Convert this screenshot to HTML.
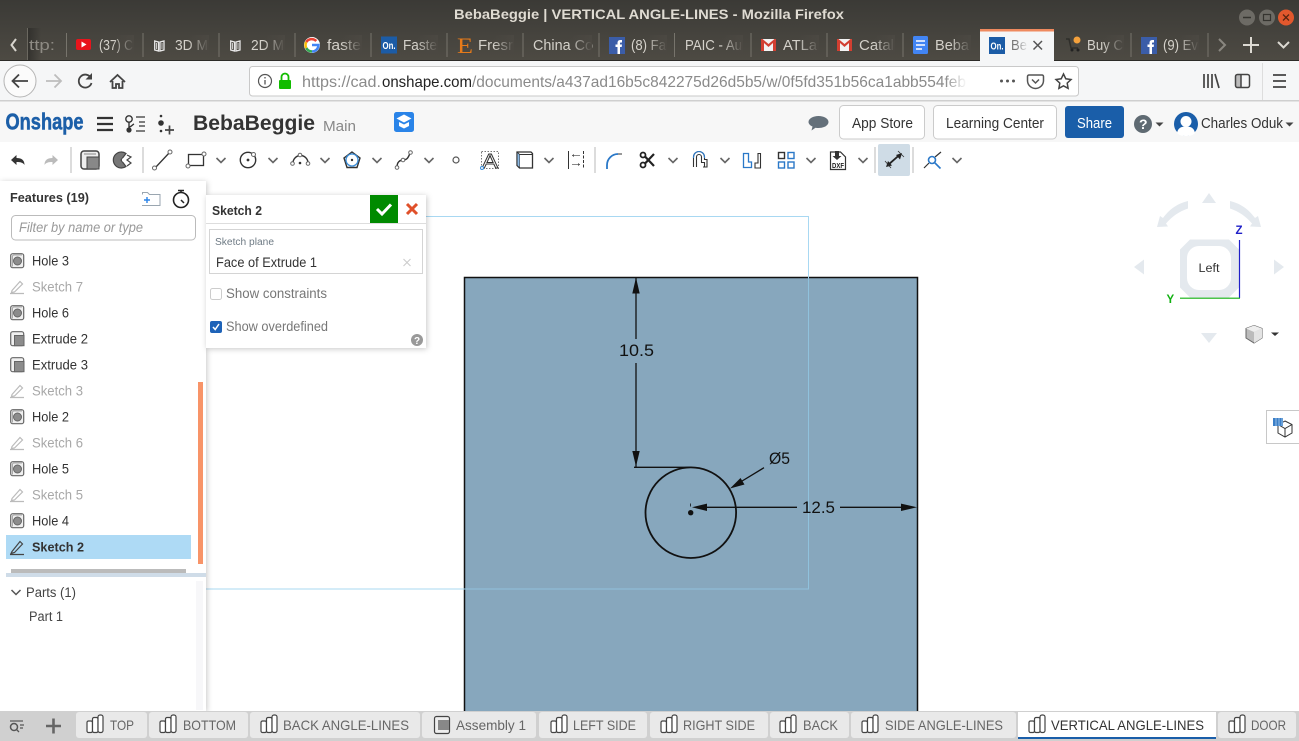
<!DOCTYPE html>
<html><head><meta charset="utf-8"><title>BebaBeggie | VERTICAL ANGLE-LINES - Mozilla Firefox</title>
<style>
html,body{margin:0;padding:0;background:#fff;overflow:hidden}
svg{display:block}
text{font-family:"Liberation Sans",sans-serif}
.t{fill:#d4d1ca;font-size:15px}
.f{font-size:13.5px;fill:#333}
.g{font-size:13.5px;fill:#a8a8a8}
.b{font-size:14px;fill:#666}
.ic{fill:none;stroke:#333;stroke-width:1.4}
</style></head><body>
<svg width="1299" height="741" viewBox="0 0 1299 741" xmlns="http://www.w3.org/2000/svg">
<defs>
<linearGradient id="tb" x1="0" y1="0" x2="0" y2="1"><stop offset="0" stop-color="#3b3a36"/><stop offset="1" stop-color="#4d4a43"/></linearGradient>
<linearGradient id="fd"><stop offset="0" stop-color="#4b4842" stop-opacity="0"/><stop offset="1" stop-color="#4b4842"/></linearGradient>
<linearGradient id="fa"><stop offset="0" stop-color="#f5f6f7" stop-opacity="0"/><stop offset="1" stop-color="#f5f6f7"/></linearGradient>
<linearGradient id="fw"><stop offset="0" stop-color="#fff" stop-opacity="0"/><stop offset="1" stop-color="#fff"/></linearGradient>
<linearGradient id="sd"><stop offset="0" stop-color="#2a2926" stop-opacity=".7"/><stop offset="1" stop-color="#2a2926" stop-opacity="0"/></linearGradient>
<filter id="sh" x="-10%" y="-10%" width="125%" height="125%"><feDropShadow dx="1" dy="1" stdDeviation="3" flood-color="#000" flood-opacity=".22"/></filter>
<g id="hole"><rect x="0.7" y="0.7" width="13" height="14" rx="2" fill="#f0f0f0" stroke="#666" stroke-width="1.200"/><path d="M2.500 13.500V3.500a1.500 1.500 0 0 1 1.500-1.500h8" fill="none" stroke="#aaa"/><circle cx="7.500" cy="8" r="4" fill="#8c8c8c" stroke="#666"/></g>
<g id="ext"><rect x="0.7" y="0.7" width="13" height="14" rx="2" fill="#f0f0f0" stroke="#666" stroke-width="1.200"/><rect x="4.500" y="4.500" width="9.500" height="10.200" fill="#8c8c8c" stroke="#666"/></g>
<g id="pen"><path d="M1 14.500H15M3 11.500 11 2.500l2.500 2.500-8 8-3 .5z" fill="none" stroke="#bbb" stroke-width="1.200"/></g>
<g id="ps" fill="#fff" stroke="#444" stroke-width="1.200"><rect x="1" y="7" width="5.500" height="11.500" rx="1.500"/><rect x="6.500" y="3.500" width="5.500" height="15" rx="1.500"/><rect x="12" y="1" width="5" height="17.500" rx="2"/></g>
<path id="chev" d="M0 0l4.500 4.500L9 0" fill="none" stroke="#666" stroke-width="1.600"/>
<g id="gm"><rect width="15" height="12" fill="#f3f3f3"/><path d="M0 0v12h3V4l4.500 4L12 4v8h3V0h-1.500L7.500 5 1.500 0z" fill="#d23f31"/></g>
<g id="fb"><rect width="16" height="17" fill="#3b5da8"/><path d="M8.500 17v-7H6.500V7.500h2V6c0-2 1-3 3-3h1.500v2.500h-1c-.8 0-1 .3-1 1v1h2l-.3 2.500H11v7z" fill="#fff"/></g>
<g id="on"><rect width="16" height="17" fill="#1c5ca6"/><text x="1.500" y="12.500" font-size="10.500" font-weight="700" fill="#fff" textLength="13" lengthAdjust="spacingAndGlyphs">On.</text></g>
<g id="bk" fill="none" stroke="#e8e8e8" stroke-width="1.300"><path d="M.7 1v9l3.800 1V2zM6 2v9l4-1V1z"/><path d="M2.500 3v6M8 3v6" stroke-width=".8"/></g>
</defs>

<!-- Title bar -->
<rect width="1299" height="60" fill="url(#tb)"/>
<text x="454" y="19" font-size="13.500" font-weight="700" fill="#dfdbd2" textLength="390" lengthAdjust="spacingAndGlyphs">BebaBeggie | VERTICAL ANGLE-LINES - Mozilla Firefox</text>
<circle cx="1247" cy="17.500" r="8" fill="#6d6b65"/><path d="M1243 17.500h8" stroke="#35342f" stroke-width="1.500"/>
<circle cx="1267" cy="17.500" r="8" fill="#6d6b65"/><rect x="1263.500" y="14.500" width="7" height="6" fill="none" stroke="#35342f" stroke-width="1.200"/>
<circle cx="1286" cy="17.500" r="8" fill="#e2582d"/><path d="M1283 14.500l6 6m0-6l-6 6" stroke="#5a2410" stroke-width="1.300"/>

<!-- Tabs -->
<path d="M66.500 33V57M143 33V57M219 33V57M295 33V57M371 33V57M447 33V57M523 33V57M599 33V57M674.500 33V57M751 33V57M827 33V57M903 33V57M1131 33V57M1208 33V57" stroke="#77746c" fill="none"/>
<path d="M27.500 28V60" stroke="#6b6860" fill="none"/>
<rect x="28" y="28" width="13" height="32" fill="url(#sd)"/>
<g transform="translate(0 -5)">
<path d="M16 44l-4.500 6 4.500 6" fill="none" stroke="#d8d5ce" stroke-width="2"/>
<text x="29" y="55" class="t" style="fill:#8e8b84" textLength="26" lengthAdjust="spacingAndGlyphs">ttp:</text>
<rect x="76" y="44" width="15" height="11" rx="2" fill="#e8141c"/><path d="M81.500 46.500v6l5-3z" fill="#fff"/>
<text x="99" y="55" class="t" textLength="34" lengthAdjust="spacingAndGlyphs">(37) C</text><rect x="113" y="40" width="21" height="19" fill="url(#fd)"/>
<use href="#bk" x="154" y="45"/><text x="175" y="55" class="t" textLength="33" lengthAdjust="spacingAndGlyphs">3D M</text><rect x="188" y="40" width="21" height="19" fill="url(#fd)"/>
<use href="#bk" x="230" y="45"/><text x="251" y="55" class="t" textLength="33" lengthAdjust="spacingAndGlyphs">2D M</text><rect x="264" y="40" width="21" height="19" fill="url(#fd)"/>
<circle cx="312" cy="50" r="8" fill="#fff"/><path d="M312 50h6.500a6.500 6.500 0 0 1-6.500 6.500" fill="none" stroke="#4285f4" stroke-width="2.500"/><path d="M312 56.500a6.500 6.500 0 0 1-5.700-3.500" fill="none" stroke="#34a853" stroke-width="2.500"/><path d="M306.300 53a6.500 6.500 0 0 1 0-6" fill="none" stroke="#fbbc05" stroke-width="2.500"/><path d="M306.300 47a6.500 6.500 0 0 1 10-1" fill="none" stroke="#ea4335" stroke-width="2.500"/>
<text x="327" y="55" class="t" textLength="34" lengthAdjust="spacingAndGlyphs">faste</text><rect x="341" y="40" width="21" height="19" fill="url(#fd)"/>
<use href="#on" x="381" y="41.500"/><text x="403" y="55" class="t" textLength="34" lengthAdjust="spacingAndGlyphs">Faste</text><rect x="417" y="40" width="21" height="19" fill="url(#fd)"/>
<text x="457" y="58" font-size="22" fill="#e57a1a" style="font-family:'Liberation Serif',serif" textLength="16" lengthAdjust="spacingAndGlyphs">E</text>
<text x="478" y="55" class="t" textLength="35" lengthAdjust="spacingAndGlyphs">Fresr</text><rect x="493" y="40" width="21" height="19" fill="url(#fd)"/>
<text x="533" y="55" class="t" textLength="60" lengthAdjust="spacingAndGlyphs">China Co</text><rect x="570" y="40" width="22" height="19" fill="url(#fd)"/>
<use href="#fb" x="609" y="42"/>
<text x="631" y="55" class="t" textLength="35" lengthAdjust="spacingAndGlyphs">(8) Fa</text><rect x="646" y="40" width="21" height="19" fill="url(#fd)"/>
<text x="685" y="55" class="t" textLength="57" lengthAdjust="spacingAndGlyphs">PAIC - Au</text><rect x="722" y="40" width="21" height="19" fill="url(#fd)"/>
<use href="#gm" x="761" y="44"/><text x="783" y="55" class="t" textLength="34" lengthAdjust="spacingAndGlyphs">ATLa</text><rect x="798" y="40" width="21" height="19" fill="url(#fd)"/>
<use href="#gm" x="837" y="44"/><text x="859" y="55" class="t" textLength="35" lengthAdjust="spacingAndGlyphs">Catal</text><rect x="874" y="40" width="21" height="19" fill="url(#fd)"/>
<rect x="913" y="41" width="15" height="18" rx="1.500" fill="#4285f4"/><path d="M916 46h9M916 50h9M916 54h6" stroke="#fff" stroke-width="1.500"/>
<text x="935" y="55" class="t" textLength="34" lengthAdjust="spacingAndGlyphs">Beba</text><rect x="950" y="40" width="21" height="19" fill="url(#fd)"/>
<path d="M1066 44h3l2 9h7" fill="none" stroke="#2f2e2a" stroke-width="1.500"/><circle cx="1077" cy="45" r="3.500" fill="#f4a13c"/><circle cx="1072" cy="55" r="1.500" fill="#222"/><circle cx="1078" cy="55" r="1.500" fill="#222"/>
<text x="1087" y="55" class="t" textLength="36" lengthAdjust="spacingAndGlyphs">Buy C</text><rect x="1103" y="40" width="21" height="19" fill="url(#fd)"/>
<use href="#fb" x="1141" y="42"/>
<text x="1163" y="55" class="t" textLength="35" lengthAdjust="spacingAndGlyphs">(9) Ev</text><rect x="1178" y="40" width="21" height="19" fill="url(#fd)"/>
<path d="M1219 44l6 6-6 6" fill="none" stroke="#8a8780" stroke-width="2"/>
<path d="M1251 42v16M1243 50h16" stroke="#dcd9d2" stroke-width="2" fill="none"/>
<path d="M1278 47l5.500 5.500 5.500-5.500" fill="none" stroke="#dcd9d2" stroke-width="2"/>
</g>
<path d="M0 60.500H1299" stroke="#2c2b28"/>
<rect x="980" y="29" width="74" height="33" fill="#f5f6f7"/><rect x="980" y="29" width="74" height="2.500" fill="#ef8a5f"/>
<use href="#on" x="989" y="37"/><text x="1011" y="50" font-size="15" fill="#777" textLength="16" lengthAdjust="spacingAndGlyphs">Be</text><rect x="1016" y="36" width="12" height="19" fill="url(#fa)"/>
<path d="M1033.500 41l8.500 8.500m0-8.500l-8.500 8.500" stroke="#555" stroke-width="1.500"/>

<!-- Nav bar -->
<rect y="61" width="980" height="40" fill="#f5f6f7"/><rect x="1054" y="61" width="245" height="40" fill="#f5f6f7"/><rect x="980" y="60" width="74" height="41" fill="#f5f6f7"/>
<rect y="100" width="1299" height="1.500" fill="#cfcfcf"/>
<circle cx="20" cy="81" r="16" fill="#fbfbfb" stroke="#b5b5b5"/>
<path d="M28 81H13M19 74.500 12.500 81l6.500 6.500" fill="none" stroke="#444" stroke-width="1.800"/>
<path d="M61 81H46M54.500 74.500 61 81l-6.500 6.500" fill="none" stroke="#bdbdbd" stroke-width="1.800"/>
<path d="M91 78a6.500 6.500 0 1 0 .5 5" fill="none" stroke="#444" stroke-width="1.800"/><path d="M92 73v6.500h-6.500z" fill="#444"/>
<path d="M110 82l7.500-7 7.500 7M112.500 81v7h3.500v-4h3v4h3.500v-7" fill="none" stroke="#444" stroke-width="1.800"/>
<rect x="249.500" y="66.500" width="829" height="29.500" rx="3" fill="#fff" stroke="#c9c9c9"/>
<circle cx="265" cy="81" r="6.500" fill="none" stroke="#555" stroke-width="1.200"/><path d="M265 80v4.500M265 77v1.500" stroke="#555" stroke-width="1.300"/>
<rect x="279" y="80" width="12" height="9" rx="1" fill="#12bc00"/><path d="M281.500 80v-3a3.500 3.500 0 0 1 7 0v3" fill="none" stroke="#12bc00" stroke-width="1.800"/>
<text x="302" y="87" font-size="16" fill="#8a8a8a" textLength="79" lengthAdjust="spacingAndGlyphs">https://cad.</text>
<text x="382" y="87" font-size="16" fill="#222" textLength="90" lengthAdjust="spacingAndGlyphs">onshape.com</text>
<text x="472" y="87" font-size="16" fill="#8a8a8a" textLength="494" lengthAdjust="spacingAndGlyphs">/documents/a437ad16b5c842275d26d5b5/w/0f5fd351b56ca1abb554feb</text>
<rect x="945" y="70" width="22" height="22" fill="url(#fw)"/>
<circle cx="1001.500" cy="81" r="1.500" fill="#555"/><circle cx="1007.500" cy="81" r="1.500" fill="#555"/><circle cx="1013.500" cy="81" r="1.500" fill="#555"/>
<path d="M1029 75h13a1.500 1.500 0 0 1 1.500 1.500v4a8 8 0 0 1-16 0v-4A1.500 1.500 0 0 1 1029 75z" fill="none" stroke="#555" stroke-width="1.500"/><path d="M1032 79.500l3.500 3.500 3.500-3.500" fill="none" stroke="#555" stroke-width="1.500"/>
<path d="M1063.500 74l2.300 4.800 5.200.7-3.800 3.600.9 5.200-4.600-2.500-4.600 2.500.9-5.200-3.800-3.600 5.200-.7z" fill="none" stroke="#444" stroke-width="1.500"/>
<path d="M1204 74v14M1208 74v14M1212 74v14M1215 74l4 14" fill="none" stroke="#444" stroke-width="1.700"/>
<rect x="1236" y="75" width="5" height="12" fill="#bbb"/><rect x="1235.500" y="74.500" width="14" height="13" rx="2" fill="none" stroke="#444" stroke-width="1.500"/><path d="M1241 75v12" stroke="#444" stroke-width="1.500"/>
<path d="M1262.500 63V100" stroke="#ddd"/>
<path d="M1273 75h13M1273 81h13M1273 87h13" stroke="#444" stroke-width="1.700"/>

<!-- App header -->
<rect y="101.500" width="1299" height="40.500" fill="#f7f7f7"/>
<text x="5.500" y="129.500" font-size="23" font-weight="700" fill="#1c5fa8" stroke="#1c5fa8" stroke-width=".5" textLength="78" lengthAdjust="spacingAndGlyphs">Onshape</text>
<path d="M97 118h16M97 124h16M97 130h16" stroke="#333" stroke-width="2.300"/>
<circle cx="129" cy="119" r="3.200" fill="none" stroke="#333" stroke-width="1.400"/><circle cx="129" cy="130" r="2.600" fill="#333"/><path d="M129 122v6M129 127c2 0 3-2 5-3" fill="none" stroke="#333" stroke-width="1.400"/><path d="M136 117h9M139 122h6M139 126h6M136 131h9" stroke="#555" stroke-width="1.400"/>
<circle cx="161" cy="116" r="1.300" fill="#333"/><circle cx="161" cy="123" r="2.800" fill="#333"/><circle cx="161" cy="131" r="1.300" fill="#333"/><path d="M165 130h9M169.500 125.500v9" stroke="#444" stroke-width="1.700"/>
<text x="193" y="130" font-size="21" font-weight="700" fill="#333" textLength="122" lengthAdjust="spacingAndGlyphs">BebaBeggie</text>
<text x="323" y="131" font-size="15" fill="#888" textLength="33" lengthAdjust="spacingAndGlyphs">Main</text>
<rect x="394" y="112" width="20" height="20" rx="2.500" fill="#2a84e8"/><path d="M396.500 118.500l7.500-4 7.500 4-7.500 4zM399 122v4l5 2.500 5-2.500v-4l-5 2.500z" fill="#fff"/>
<path d="M818.500 116c5.500 0 10 2.500 10 6s-4.500 6-10 6c-1 0-2 0-3-.3l-4 2.800 1-4c-2.500-1.100-4-2.700-4-4.500 0-3.500 4.500-6 10-6z" fill="#64707a"/>
<rect x="839.500" y="105.500" width="85" height="33.500" rx="4" fill="#fff" stroke="#cbcbcb"/>
<text x="852" y="128" font-size="14.500" fill="#333" textLength="61" lengthAdjust="spacingAndGlyphs">App Store</text>
<rect x="933.500" y="105.500" width="123" height="33.500" rx="4" fill="#fff" stroke="#cbcbcb"/>
<text x="946" y="128" font-size="14.500" fill="#333" textLength="98" lengthAdjust="spacingAndGlyphs">Learning Center</text>
<rect x="1065" y="106" width="59" height="32" rx="3" fill="#1a5ea9"/>
<text x="1077" y="128" font-size="14.500" fill="#fff" textLength="35" lengthAdjust="spacingAndGlyphs">Share</text>
<circle cx="1143" cy="124" r="9" fill="#5f6a72"/><text x="1139" y="129" font-size="14" font-weight="700" fill="#fff">?</text>
<path d="M1155.500 122.500h8l-4 4z" fill="#444"/>
<circle cx="1186" cy="124" r="12" fill="#1a5ea9"/><circle cx="1186" cy="121.500" r="5.500" fill="#fff"/><path d="M1177 133c1-5 4-6.500 9-6.500s8 1.500 9 6.500c-2 2.500-6 3-9 3s-7-.5-9-3z" fill="#fff"/>
<text x="1201" y="128" font-size="14.500" fill="#333" textLength="82" lengthAdjust="spacingAndGlyphs">Charles Oduk</text>
<path d="M1285.500 122.500h8l-4 4z" fill="#444"/>

<!-- Toolbar -->
<rect y="142" width="1299" height="36" fill="#fff"/>
<path d="M11 160l5.500-5v3c5 0 8 2 8 7-1.500-2.500-4-3-8-3v3z" fill="#333"/>
<path d="M58 160l-5.500-5v3c-5 0-8 2-8 7 1.500-2.500 4-3 8-3v3z" fill="#bbb"/>
<path d="M71 147v26M143 147v26M595 147v26M875 147v26M913 147v26" stroke="#dcdcdc" stroke-width="2"/>
<rect x="81" y="151" width="18" height="18" rx="3" fill="#eee" stroke="#444" stroke-width="1.500"/><path d="M84 154h12" stroke="#888"/><rect x="87" y="157" width="12" height="12" fill="#888" stroke="#444"/>
<path d="M126 153.500a8 8 0 1 0 0 13l-5-6.500z" fill="#777" stroke="#444" stroke-width="1.200"/><circle cx="124" cy="160" r="2" fill="#fff"/><path d="M127 155l4 2-4 3 4 3-4 3" fill="none" stroke="#444" stroke-width="1.200"/>
<path d="M155 168l15-16" stroke="#333" stroke-width="1.300"/><circle cx="154.500" cy="168" r="2" fill="#fff" stroke="#666"/><circle cx="170" cy="152" r="2" fill="#fff" stroke="#666"/>
<rect x="188.500" y="154.500" width="15" height="11" fill="none" stroke="#333" stroke-width="1.300"/><circle cx="188" cy="166" r="2" fill="#fff" stroke="#666"/><circle cx="204" cy="154" r="2" fill="#fff" stroke="#666"/>
<use href="#chev" x="216.500" y="158"/>
<circle cx="248" cy="160" r="7.700" class="ic"/><circle cx="248" cy="160" r="1.400" fill="#333"/><circle cx="253.500" cy="154.500" r="2" fill="#fff" stroke="#666"/>
<use href="#chev" x="268.500" y="158"/>
<path d="M293 163a7.500 7.500 0 0 1 15 0" class="ic"/><circle cx="292.500" cy="163.500" r="1.800" fill="#fff" stroke="#666"/><circle cx="308" cy="163.500" r="1.800" fill="#fff" stroke="#666"/><circle cx="300" cy="155" r="1.800" fill="#fff" stroke="#666"/><circle cx="300" cy="163" r="1.300" fill="#333"/>
<use href="#chev" x="320.500" y="158"/>
<path d="M352 152l8 6-3 9.500h-10l-3-9.500z" class="ic"/><circle cx="352" cy="160" r="6" fill="none" stroke="#3a8dd8" stroke-width="1.300"/><circle cx="352" cy="160" r="1.200" fill="#333"/>
<use href="#chev" x="372.500" y="158"/>
<path d="M397 167c0-5 3-7 6-7s5-1 7-7" class="ic"/><circle cx="397" cy="167.500" r="1.800" fill="#fff" stroke="#666"/><circle cx="403" cy="160" r="1.800" fill="#fff" stroke="#666"/><circle cx="410.500" cy="152.500" r="1.800" fill="#fff" stroke="#666"/>
<use href="#chev" x="424.500" y="158"/>
<circle cx="456" cy="160" r="3" fill="#fff" stroke="#555" stroke-width="1.200"/>
<rect x="481.500" y="151.500" width="17" height="17" fill="none" stroke="#777" stroke-dasharray="1.500 1.500"/>
<text x="482" y="168" font-size="20" fill="#fff" stroke="#333" stroke-width=".9" textLength="16" lengthAdjust="spacingAndGlyphs">A</text><circle cx="482" cy="168" r="1.500" fill="#fff" stroke="#3a8dd8"/>
<path d="M517 152h14l1.500 1.500V168h-13l-2.500-2.500z" fill="none" stroke="#333" stroke-width="1.300"/><path d="M517 152l2.500 2.500H532M519.500 154.500V168" fill="none" stroke="#333"/><path d="M517.500 153v12l2 2V155z" fill="#8bb9e4"/>
<use href="#chev" x="544.500" y="158"/>
<path d="M583.500 151v18" stroke="#333" stroke-dasharray="3 1.500"/><path d="M568.500 151v18" stroke="#333"/><path d="M572 155.500h8M572 164.500h8" stroke="#888"/><path d="M572 155.500l2-1.500v3zM580 164.500l-2-1.500v3z" fill="#555"/>
<path d="M607 169v-4c0-6 5-11 11-11h4" fill="none" stroke="#333"/><path d="M607 169v-4c0-6 5-11 11-11" fill="none" stroke="#2a78c8" stroke-width="1.800"/>
<circle cx="643" cy="165" r="2.500" fill="none" stroke="#222" stroke-width="1.800"/><circle cx="643" cy="155" r="2.500" fill="none" stroke="#222" stroke-width="1.800"/><path d="M645 163.500 654 154M645 156.500l9 9.500" stroke="#222" stroke-width="2.200"/>
<use href="#chev" x="668.500" y="158"/>
<path d="M693.500 167v-10a5.500 5.500 0 0 1 11 0v2.500h2.500v7.500h-4" fill="none" stroke="#333" stroke-width="1.100"/><path d="M696.500 167V157a2.500 2.500 0 0 1 5 0v5.500h3v4.500" fill="none" stroke="#333" stroke-width="1.100"/><path d="M693.500 158v-1a5.500 5.500 0 0 1 11 0v1" fill="none" stroke="#2a78c8" stroke-width="1.100"/>
<use href="#chev" x="720.500" y="158"/>
<path d="M743.500 153.500h5v8.500h3v5.500h-8z" fill="none" stroke="#2a78c8" stroke-width="1.300"/><path d="M755 168h5.500V153.500H758v9.500h-3z" fill="none" stroke="#333" stroke-width="1.100"/>
<rect x="778.500" y="152.500" width="6" height="6" fill="none" stroke="#333" stroke-width="1.400"/><rect x="788" y="152.500" width="6" height="6" fill="none" stroke="#2a78c8" stroke-width="1.400"/><rect x="778.500" y="162" width="6" height="6" fill="none" stroke="#2a78c8" stroke-width="1.400"/><rect x="788" y="162" width="6" height="6" fill="none" stroke="#2a78c8" stroke-width="1.400"/>
<use href="#chev" x="806.500" y="158"/>
<path d="M830.500 152h10l5 5v12.500h-15z" fill="#fff" stroke="#333" stroke-width="1.200"/><path d="M835 151v5h-2.500l4.500 4 4.500-4H839v-5z" fill="#333"/>
<text x="832" y="168" font-size="7" font-weight="700" fill="#222" textLength="12" lengthAdjust="spacingAndGlyphs">DXF</text>
<use href="#chev" x="858.500" y="158"/>
<rect x="878" y="144" width="32" height="32" rx="2" fill="#cfdce6"/>
<path d="M888 165l12-10.500" stroke="#222" stroke-width="1.800"/><path d="M886 167l2-6 4 4.500zM902 153l-6 2 4 4.500z" fill="#222"/><path d="M885 161l6 7M898 151l6 6" stroke="#333" stroke-width=".8"/>
<path d="M924 168l5-5M935 157l6-5" stroke="#333" stroke-width="1.200"/><circle cx="932" cy="160" r="3.500" fill="none" stroke="#2a78c8" stroke-width="1.600"/><path d="M934.500 162.500l6 6" stroke="#2a78c8" stroke-width="1.600"/>
<use href="#chev" x="952.500" y="158"/>

<!-- Canvas -->
<rect x="0" y="178" width="1299" height="533" fill="#fff"/>
<rect x="464.500" y="277.500" width="453" height="450" fill="#87a7bd" stroke="#111" stroke-width="1.500"/>
<path d="M426 216.500H808.500V589H206" fill="none" stroke="#a8d8f2" stroke-width="1"/>
<path d="M808.500 278V589H465" fill="none" stroke="#90c2dd"/>
<g stroke="#111" fill="none" stroke-width="1.300">
<path d="M636 278V339M636 363V467M634 467.300H690"/>
<circle cx="690.800" cy="512.700" r="45.300" stroke-width="1.800"/>
<path d="M700 507.300H797M840 507.300H905M764 467.700 738 483.500"/>
</g>
<g fill="#111">
<path d="M636 277.500l3.700 16h-7.400zM636 466.500l-3.700-15.500h7.400zM692 507.300l15-3.700v7.400zM917 507.300l-16-3.700v7.400zM730 488.500l10.500-10.500 4 6.500z"/>
<circle cx="690.700" cy="512.700" r="2.700"/>
<path d="M690.500 503.500v3" stroke="#111" stroke-width=".8"/>
</g>
<text x="619" y="356" font-size="16.500" fill="#111" textLength="35" lengthAdjust="spacingAndGlyphs">10.5</text>
<text x="769" y="464" font-size="16.500" fill="#111" textLength="21" lengthAdjust="spacingAndGlyphs">Ø5</text>
<text x="802" y="513" font-size="16.500" fill="#111" textLength="33" lengthAdjust="spacingAndGlyphs">12.5</text>

<!-- Nav cube -->
<g fill="#e4e9ee">
<path d="M1209 193l7 10h-14zM1134 267l10-7.500v15zM1284 267l-10-7.500v15zM1209 343l-8-10h16z"/>
<path d="M1188 201c-12 3-19 9-25 17l-3-2-3 11 11-.5-2-3c6-7 13-12 22-15z"/>
<path d="M1230 201c12 3 19 9 25 17l3-2 3 11-11-.5 2-3c-6-7-13-12-22-15z"/>
<path d="M1190 239.500h39l10 10v38l-10 10h-39l-10-10v-38z"/>
</g>
<rect x="1187" y="246" width="44" height="44" rx="12" fill="#fff"/>
<text x="1198.500" y="272" font-size="11.500" fill="#333" textLength="21" lengthAdjust="spacingAndGlyphs">Left</text>
<path d="M1239.500 240V298" stroke="#2020c8" stroke-width="1.200"/>
<path d="M1180 298.200h60" stroke="#10b010" stroke-width="1.200"/>
<text x="1235.500" y="234" font-size="11.500" font-weight="700" fill="#2020c8">Z</text>
<text x="1166.500" y="303" font-size="11.500" font-weight="700" fill="#10b010">Y</text>
<path d="M1254 325.500l8 3v9.500l-8 5-8-5v-9.500z" fill="#bbb" stroke="#666"/><path d="M1254 332v11l8-5v-9.500z" fill="#e3e3e3"/><path d="M1246 328.500l8 3.500 8-3.500-8-3z" fill="#eee"/>
<path d="M1271 332.500h8l-4 3.500z" fill="#333"/>
<rect x="1266.500" y="410.500" width="33" height="33" fill="#fff" stroke="#c8c8c8"/>
<path d="M1285 421l7 3.500v8.500l-7 4-7-4v-8.500z M1278 424.500l7 4 7-4M1285 428.500v8" fill="none" stroke="#333"/>
<rect x="1273" y="418" width="10" height="8" fill="#3b7fc8"/><path d="M1276 418v8M1279 418v8M1282 418v8" stroke="#bcd6f0" stroke-width=".7"/>

<!-- Features panel -->
<rect x="0" y="181" width="206" height="530" fill="#fff" filter="url(#sh)"/>
<text x="10" y="202" font-size="13" font-weight="700" fill="#333" textLength="79" lengthAdjust="spacingAndGlyphs">Features (19)</text>
<path d="M142.500 194.500v-2h5l2 2h10.500v11h-18" fill="none" stroke="#9aa6b0"/><path d="M147 197v6M144 200h6" stroke="#2a84e8" stroke-width="1.400"/>
<circle cx="181" cy="200" r="7.500" fill="none" stroke="#222" stroke-width="1.600"/><path d="M178 190.500h6M181 191v2M181 200l3 3" stroke="#222" stroke-width="1.500"/>
<rect x="11.500" y="215.500" width="184" height="24.500" rx="4" fill="#fff" stroke="#bbb"/>
<text x="19" y="232" font-size="13.500" font-style="italic" fill="#999" textLength="124" lengthAdjust="spacingAndGlyphs">Filter by name or type</text>

<use href="#hole" x="10" y="253"/><text x="32" y="265.500" class="f" textLength="37" lengthAdjust="spacingAndGlyphs">Hole 3</text>
<use href="#pen" x="9" y="279"/><text x="32" y="291.500" class="g" textLength="51" lengthAdjust="spacingAndGlyphs">Sketch 7</text>
<use href="#hole" x="10" y="305"/><text x="32" y="317.500" class="f" textLength="37" lengthAdjust="spacingAndGlyphs">Hole 6</text>
<use href="#ext" x="10" y="331"/><text x="32" y="343.500" class="f" textLength="56" lengthAdjust="spacingAndGlyphs">Extrude 2</text>
<use href="#ext" x="10" y="357"/><text x="32" y="369.500" class="f" textLength="56" lengthAdjust="spacingAndGlyphs">Extrude 3</text>
<use href="#pen" x="9" y="383"/><text x="32" y="395.500" class="g" textLength="51" lengthAdjust="spacingAndGlyphs">Sketch 3</text>
<use href="#hole" x="10" y="409"/><text x="32" y="421.500" class="f" textLength="37" lengthAdjust="spacingAndGlyphs">Hole 2</text>
<use href="#pen" x="9" y="435"/><text x="32" y="447.500" class="g" textLength="51" lengthAdjust="spacingAndGlyphs">Sketch 6</text>
<use href="#hole" x="10" y="461"/><text x="32" y="473.500" class="f" textLength="37" lengthAdjust="spacingAndGlyphs">Hole 5</text>
<use href="#pen" x="9" y="487"/><text x="32" y="499.500" class="g" textLength="51" lengthAdjust="spacingAndGlyphs">Sketch 5</text>
<use href="#hole" x="10" y="513"/><text x="32" y="525.500" class="f" textLength="37" lengthAdjust="spacingAndGlyphs">Hole 4</text>
<rect x="6" y="535" width="185" height="24" fill="#aedaf5"/>
<path d="M10 554.500H24M12 551.500 20 541.500l2.500 2.500-8 8.500-3.500 1z" fill="none" stroke="#444" stroke-width="1.200"/>
<text x="32" y="551.500" font-size="13" font-weight="700" fill="#333" textLength="52" lengthAdjust="spacingAndGlyphs">Sketch 2</text>
<rect x="198" y="382" width="5" height="182" fill="#f89468"/>
<rect x="11" y="569" width="175" height="4" fill="#bbb"/>
<rect x="6" y="573" width="200" height="4" fill="#cfdce8"/>
<rect x="196" y="581" width="7" height="129" fill="#f7f7f9"/>
<path d="M11.500 590l4.500 4.500 4.500-4.500" fill="none" stroke="#555" stroke-width="1.500"/>
<text x="26" y="597" font-size="13.500" fill="#444" textLength="50" lengthAdjust="spacingAndGlyphs">Parts (1)</text>
<text x="29" y="621" font-size="13.500" fill="#444" textLength="34" lengthAdjust="spacingAndGlyphs">Part 1</text>

<!-- Sketch dialog -->
<rect x="206" y="195" width="220" height="153" fill="#fff" filter="url(#sh)"/>
<text x="212" y="215" font-size="13" font-weight="700" fill="#333" textLength="50" lengthAdjust="spacingAndGlyphs">Sketch 2</text>
<rect x="370" y="195" width="28" height="28" fill="#008a00"/>
<path d="M377 209l5 5 9-9.500" fill="none" stroke="#fff" stroke-width="3"/>
<path d="M407 204l10 10m0-10l-10 10" stroke="#e0502a" stroke-width="3"/>
<path d="M206 223.500H426" stroke="#ddd"/>
<rect x="209.500" y="229.500" width="213" height="44" fill="#fff" stroke="#d4d4d4"/>
<text x="215" y="245" font-size="10" fill="#6e7a84" textLength="59" lengthAdjust="spacingAndGlyphs">Sketch plane</text>
<text x="216" y="267" font-size="13.500" fill="#333" textLength="101" lengthAdjust="spacingAndGlyphs">Face of Extrude 1</text>
<path d="M403.500 259l7 7m0-7l-7 7" stroke="#ccc" stroke-width="1.100"/>
<rect x="210.500" y="288.500" width="11" height="11" rx="2" fill="#fff" stroke="#ccc"/>
<text x="226" y="298" font-size="13.500" fill="#777" textLength="101" lengthAdjust="spacingAndGlyphs">Show constraints</text>
<rect x="210" y="321" width="12" height="12" rx="2" fill="#1e63b8"/>
<path d="M213 327l2.200 2.500 3.800-5.500" fill="none" stroke="#fff" stroke-width="1.500"/>
<text x="226" y="331" font-size="13.500" fill="#777" textLength="102" lengthAdjust="spacingAndGlyphs">Show overdefined</text>
<circle cx="417" cy="340" r="6" fill="#999"/><text x="414" y="344" font-size="10" font-weight="700" fill="#fff">?</text>

<!-- Bottom tabs -->
<rect y="711" width="1299" height="30" fill="#d0d0d0"/>
<path d="M10 721h13" stroke="#555" stroke-width="1.200"/><circle cx="14" cy="727" r="3.500" fill="none" stroke="#555" stroke-width="1.500"/><path d="M16.500 729.500l2.500 2.500M20 725h4M20 728h3" stroke="#555" stroke-width="1.300"/>
<path d="M46 726h15M53.500 718.500v15" stroke="#666" stroke-width="2.600"/>
<g fill="#e9e9e9">
<rect x="76" y="712" width="71" height="26" rx="3"/><rect x="149" y="712" width="99" height="26" rx="3"/><rect x="250" y="712" width="170" height="26" rx="3"/><rect x="422" y="712" width="114" height="26" rx="3"/><rect x="539" y="712" width="108" height="26" rx="3"/><rect x="650" y="712" width="118" height="26" rx="3"/><rect x="770" y="712" width="79" height="26" rx="3"/><rect x="851" y="712" width="165" height="26" rx="3"/><rect x="1218" y="712" width="78" height="26" rx="3"/>
</g>
<rect x="1018" y="712" width="198" height="27" fill="#fff"/><rect x="1018" y="737" width="198" height="2" fill="#1a5ea9"/>
<use href="#ps" x="86" y="714"/><text x="110" y="730" class="b" textLength="24" lengthAdjust="spacingAndGlyphs">TOP</text>
<use href="#ps" x="159" y="714"/><text x="183" y="730" class="b" textLength="53" lengthAdjust="spacingAndGlyphs">BOTTOM</text>
<use href="#ps" x="260" y="714"/><text x="283" y="730" class="b" textLength="126" lengthAdjust="spacingAndGlyphs">BACK ANGLE-LINES</text>
<rect x="434.500" y="716.500" width="15" height="17" rx="2" fill="#eee" stroke="#444" stroke-width="1.200"/><rect x="438" y="720" width="11" height="10" fill="#888"/>
<text x="456" y="730" class="b" textLength="70" lengthAdjust="spacingAndGlyphs">Assembly 1</text>
<use href="#ps" x="550" y="714"/><text x="573" y="730" class="b" textLength="63" lengthAdjust="spacingAndGlyphs">LEFT SIDE</text>
<use href="#ps" x="660" y="714"/><text x="683" y="730" class="b" textLength="72" lengthAdjust="spacingAndGlyphs">RIGHT SIDE</text>
<use href="#ps" x="779" y="714"/><text x="803" y="730" class="b" textLength="35" lengthAdjust="spacingAndGlyphs">BACK</text>
<use href="#ps" x="861" y="714"/><text x="885" y="730" class="b" textLength="118" lengthAdjust="spacingAndGlyphs">SIDE ANGLE-LINES</text>
<use href="#ps" x="1028" y="714"/><text x="1051" y="730" font-size="14" fill="#333" textLength="153" lengthAdjust="spacingAndGlyphs">VERTICAL ANGLE-LINES</text>
<use href="#ps" x="1228" y="714"/><text x="1251" y="730" class="b" textLength="35" lengthAdjust="spacingAndGlyphs">DOOR</text>
</svg>
</body></html>
